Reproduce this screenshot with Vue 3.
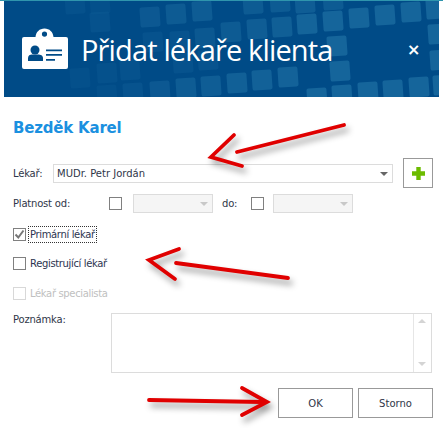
<script setup>
const tiles = [
  [75,4,.25],[100,22,.3],[100,4,.2],[150,17,.55],[176,14,.6],[202,11,.65],[253,4,.6],[280,2,.6],[305,3,.7],[333,0,.6],
  [153,42,.3],[180,41,.35],[205,38,.5],[231,32,.6],[257,29,.7],[282,27,.75],[307,24,.95],[333,21,1],[359,18,1],[385,15,1],[411,12,1],[436,9,1],
  [337,46,1],[438,34,1],[440,60,1],[340,71,1],[183,63,.3],[208,60,.35],[130,70,.3],[107,73,.25],
  [80,78,.2],[107,95,.2],[133,93,.35],[160,91,.55],[186,88,.65],[211,86,.7],[237,83,.8],[262,80,.85],[288,77,.9],
  [317,98,1],[342,95,1],[368,92,1],[393,90,1],[419,87,1],[443,85,1]
]
</script>

<template>
  <div class="page">
    <header class="head">
      <svg class="pattern" viewBox="0 0 435 96" width="435" height="96" aria-hidden="true">
        <rect
          v-for="(t, i) in tiles"
          :key="i"
          :x="t[0] - 14"
          :y="t[1] - 11"
          width="20"
          height="20"
          rx="2"
          fill="#15659b"
          :opacity="t[2]"
          :transform="`rotate(-4 ${t[0] - 4} ${t[1] - 1})`"
        />
      </svg>
      <svg class="badge" width="46" height="42" viewBox="0 0 46 42" aria-hidden="true">
        <path fill="#fff" fill-rule="evenodd" d="M2 9h11.500c.5-5 4-8.500 9-8.500s8.500 3.500 9 8.500H44a2 2 0 0 1 2 2v28a2 2 0 0 1-2 2H2a2 2 0 0 1-2-2V11a2 2 0 0 1 2-2ZM22.500 3.500a2.600 2.600 0 1 0 0 5.200a2.600 2.600 0 0 0 0-5.200Z" />
        <circle cx="13" cy="22" r="4.500" fill="#004b87" />
        <path fill="#004b87" d="M6 33v-3c0-2.500 2-3.500 4-3.500h6c2.500 0 5 1 5 3.500v3Z" />
        <path fill="#004b87" d="M24 21.500h16v1.800H24ZM24 26h16v1.800H24ZM24 31h9v1.800h-9Z" />
      </svg>
      <h1 class="title">Přidat lékaře klienta</h1>
      <span class="close">×</span>
    </header>

    <main class="form">
      <h2 class="name">Bezděk Karel</h2>

      <div class="row doctor">
        <label class="lab lab-doc">Lékař:</label>
        <div class="sel sel-main">MUDr. Petr Jordán<i class="caret"></i></div>
        <button class="plus" type="button">
          <svg width="13" height="13" viewBox="0 0 13 13" aria-hidden="true"><path fill="#6cbb00" d="M4.300 0h4.400v4.300H13v4.400H8.700V13H4.300V8.700H0V4.300h4.300Z" /></svg>
        </button>
      </div>

      <div class="row validity">
        <label class="lab lab-from">Platnost od:</label>
        <span class="box"></span>
        <div class="sel sel-date"><i class="caret dim"></i></div>
        <label class="lab lab-to">do:</label>
        <span class="box"></span>
        <div class="sel sel-date near"><i class="caret dim"></i></div>
      </div>

      <div class="row check first">
        <span class="box checked">
          <svg width="11" height="11" viewBox="0 0 11 11" aria-hidden="true"><path d="M1.500 5.500l2.800 3L9.500 1.500" fill="none" stroke="#777" stroke-width="2" /></svg>
        </span>
        <span class="chk focus">Primární lékař</span>
      </div>
      <div class="row check">
        <span class="box"></span>
        <span class="chk">Registrující lékař</span>
      </div>
      <div class="row check off">
        <span class="box"></span>
        <span class="chk">Lékař specialista</span>
      </div>

      <div class="row note">
        <label class="lab lab-note">Poznámka:</label>
        <div class="area">
          <div class="scroll"><i class="up"></i><i class="down"></i></div>
        </div>
      </div>

      <div class="actions">
        <button class="btn" type="button">OK</button>
        <button class="btn" type="button">Storno</button>
      </div>
    </main>

    <svg class="arrows" width="443" height="429" viewBox="0 0 443 429" aria-hidden="true">
      <g fill="none" stroke="#e00000" stroke-width="3.800" stroke-linecap="round" stroke-linejoin="miter">
        <path d="M344 125 237 152" />
        <path d="M234 135 211 157 242 166" />
        <path d="M176 263 288 278" />
        <path d="M179 249 149 260 175 279" />
        <path d="M149 400 262 402" />
        <path d="M242 388 267 402 242 415" />
      </g>
    </svg>
  </div>
</template>

<style scoped>
.page {
  position: relative;
  width: 443px;
  height: 429px;
  overflow: hidden;
  background: #fff;
  font-family: "DejaVu Sans", "Liberation Sans", sans-serif;
  font-size: 10px;
  color: #2f3648;
}
.head {
  position: relative;
  display: flex;
  align-items: center;
  height: 96px;
  margin: 0 4px;
  padding-left: 18px;
  background: #004b87;
  overflow: hidden;
  box-sizing: border-box;
}
.page::before {
  content: "";
  display: block;
  height: 1px;
  background: #2f95ad;
}
.pattern { position: absolute; left: 0; top: 0; }
.badge { position: relative; flex: none; }
.title {
  position: relative;
  margin: 0 0 0 13px;
  font: 400 29px "Open Sans", sans-serif;
  letter-spacing: -.85px;
  color: #fff;
  white-space: nowrap;
}
.close {
  position: absolute;
  left: 403px;
  top: 36px;
  font: 700 16px/26px "DejaVu Sans", sans-serif;
  color: #fff;
}
.form {
  padding: 22px 10px 0 13px;
}
.name {
  margin: 0;
  font: 700 15px/18px "DejaVu Sans", sans-serif;
  color: #1b90e0;
  letter-spacing: -.2px;
}
.row { display: flex; align-items: center; }
.doctor { margin-top: 21px; height: 30px; }
.lab { white-space: nowrap; letter-spacing: -.2px; }
.lab-doc { width: 40px; flex: none; }
.sel {
  position: relative;
  box-sizing: border-box;
  height: 19px;
  border: 1px solid #dcdcdc;
  line-height: 17px;
  padding-left: 3px;
  color: #2f3648;
}
.sel-main { width: 340px; flex: none; }
.caret {
  position: absolute;
  right: 4px;
  top: 7px;
  border: 4px solid transparent;
  border-top: 4px solid #666;
  border-bottom: 0;
}
.caret.dim { border-top-color: #c8c8c8; }
.plus {
  display: flex;
  align-items: center;
  justify-content: center;
  box-sizing: border-box;
  width: 30px;
  height: 30px;
  margin-left: 10px;
  padding: 0;
  border: 1px solid #999;
  background: #fff;
}
.validity { margin-top: 5px; height: 20px; }
.lab-from { width: 96px; flex: none; }
.box {
  box-sizing: border-box;
  display: flex;
  align-items: center;
  justify-content: center;
  flex: none;
  width: 13px;
  height: 13px;
  border: 1px solid #808080;
  background: #fff;
}
.sel-date {
  width: 80px;
  flex: none;
  margin-left: 11px;
  background: #f5f5f5;
}
.sel-date.near { margin-left: 9px; }
.lab-to { width: 29px; flex: none; margin-left: 9px; }
.check { height: 18px; }
.first { margin-top: 12px; }
.check + .check { margin-top: 11px; }
.check + .off { margin-top: 12px; }
.chk { margin-left: 4px; color: #2c3450; white-space: nowrap; letter-spacing: -.35px; }
.focus { outline: 1px dotted #333; margin-left: 3px; padding: 2px 1px; }
.off .box { border-color: #d8d8d8; }
.off .chk { color: #c0c0c0; }
.note { margin-top: 11px; align-items: flex-start; }
.lab-note { width: 98px; flex: none; margin-top: 1px; }
.area {
  position: relative;
  box-sizing: border-box;
  width: 321px;
  height: 60px;
  border: 1px solid #dcdcdc;
}
.scroll {
  position: absolute;
  right: 0;
  top: 0;
  bottom: 0;
  width: 17px;
  border-left: 1px solid #e6e6e6;
}
.up, .down {
  position: absolute;
  left: 4px;
  border: 4px solid transparent;
}
.up { top: 5px; border-top: 0; border-bottom-color: #d4d4d4; }
.down { bottom: 6px; border-bottom: 0; border-top-color: #d4d4d4; }
.actions {
  display: flex;
  justify-content: flex-end;
  gap: 5px;
  margin-top: 15px;
}
.btn {
  box-sizing: border-box;
  width: 75px;
  height: 30px;
  padding: 0;
  border: 1px solid #999;
  background: #fff;
  font: 400 10px "DejaVu Sans", sans-serif;
  color: #2f3648;
}
.arrows {
  position: absolute;
  left: 0;
  top: 0;
  pointer-events: none;
  filter: drop-shadow(3px 5px 3px rgba(0,0,0,.4));
}
</style>
